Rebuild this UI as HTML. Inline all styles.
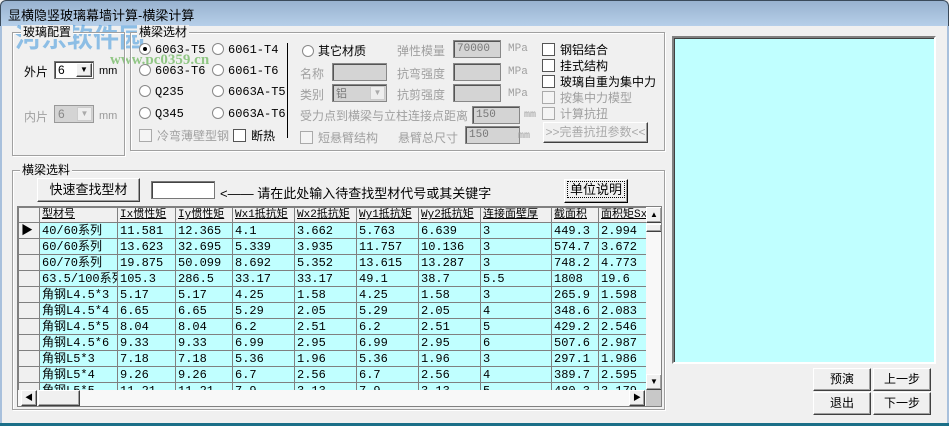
<!DOCTYPE html>
<html><head><meta charset="utf-8"><style>
*{margin:0;padding:0;box-sizing:border-box}
body{width:949px;height:426px;overflow:hidden;background:#f0f0f0;font:12px "Liberation Sans","Noto Sans CJK SC","WenQuanYi Zen Hei",sans-serif;color:#000;position:relative}
.a{position:absolute;white-space:nowrap}
.title{left:0;top:0;width:949px;height:26px;background:linear-gradient(#98b2cf,#b6cfe9);border:1px solid #3a4a5a;border-bottom:none;border-radius:6px 6px 0 0}
.grp{position:absolute;border:1px solid #a0a0a0;box-shadow:inset 1px 1px #fff,1px 1px #fff}
.lbl{position:absolute;background:#f0f0f0;padding:0 2px;top:-8px;left:6px;line-height:14px}
.rad{display:inline-block;width:12px;height:12px;border-radius:50%;border:1px solid #888;background:#fff;vertical-align:-2px;margin-right:4px;position:relative}
.chk{display:inline-block;width:13px;height:13px;border:1px solid #555;background:#fff;vertical-align:-2px;margin-right:5px}
.dis{color:#a0a0a0}
.dis .chk{border-color:#aaa;background:#f4f4f4}
.in{position:absolute;height:18px;border:1px solid #888;box-shadow:inset 1px 1px #555;background:#d4d4d4;color:#777;line-height:16px;padding-left:3px;font-family:"Liberation Mono",monospace;font-size:11px}
.btn{position:absolute;background:#f0f0f0;border:1px solid;border-color:#fff #404040 #404040 #fff;box-shadow:inset -1px -1px #a0a0a0;text-align:center}
.mono{font-family:"Liberation Mono","Noto Sans CJK SC",monospace}
table{border-collapse:collapse;table-layout:fixed}
td{border:1px solid #808080;height:16px;padding:0 0 0 2px;font-family:"Liberation Mono","Noto Sans CJK SC",monospace;font-size:12px;line-height:14px;overflow:hidden;white-space:nowrap;background:#c0ffff}
tr.h td{background:#f0f0f0;height:14px;text-decoration:underline;font-size:11px}
td.rh{background:#f0f0f0}
</style></head><body>
<div class="a title"></div>
<div class="a" style="left:8px;top:5px;font-size:13px">显横隐竖玻璃幕墙计算-横梁计算</div>
<div class="a" style="left:0;top:26px;width:2px;height:400px;background:#a8c0dc"></div>
<div class="a" style="right:0;top:26px;width:2px;height:400px;background:#a8c0dc"></div>
<div class="a" style="left:0;top:423px;width:949px;height:3px;background:#1b6f88"></div>
<div class="a" style="left:15px;top:18px;font-size:26px;font-weight:bold;color:rgba(60,150,220,.55)">河东软件园</div>
<div class="a" style="left:110px;top:52px;font-size:15px;font-weight:bold;color:rgba(80,170,60,.6);font-family:'Liberation Serif',serif">www.pc0359.cn</div>

<div class="grp" style="left:12px;top:32px;width:113px;height:124px"><span class="lbl" style="left:8px">玻璃配置</span></div>
<div class="a" style="left:24px;top:63px">外片</div>
<div class="a" style="left:54px;top:61px;width:40px;height:18px;background:#fff;border:1px solid #777;box-shadow:inset 1px 1px #444;padding-left:3px;line-height:16px">6</div>
<div class="btn" style="left:76px;top:63px;width:16px;height:14px;font-size:8px;line-height:12px">▼</div>
<div class="a" style="left:99px;top:65px;font-size:11px">mm</div>
<div class="a dis" style="left:24px;top:108px">内片</div>
<div class="a" style="left:54px;top:105px;width:40px;height:18px;background:#d4d4d4;border:1px solid #999;color:#888;padding-left:3px;line-height:16px">6</div>
<div class="a" style="left:77px;top:107px;width:15px;height:14px;border:1px solid #ccc;background:#eee;color:#aaa;font-size:8px;text-align:center;line-height:12px">▼</div>
<div class="a dis" style="left:99px;top:110px;font-size:11px;color:#999">mm</div>

<div class="grp" style="left:130px;top:32px;width:535px;height:119px"><span class="lbl">横梁选材</span></div>
<div class="a mono" style="left:139px;top:43px"><span class="rad" style="background:#fff"><span style="position:absolute;left:3px;top:3px;width:4px;height:4px;background:#000;border-radius:50%"></span></span>6063-T5</div>
<div class="a mono" style="left:212px;top:43px"><span class="rad"></span>6061-T4</div>
<div class="a mono" style="left:139px;top:64px"><span class="rad"></span>6063-T6</div>
<div class="a mono" style="left:212px;top:64px"><span class="rad"></span>6061-T6</div>
<div class="a mono" style="left:139px;top:85px"><span class="rad"></span>Q235</div>
<div class="a mono" style="left:212px;top:85px"><span class="rad"></span>6063A-T5</div>
<div class="a mono" style="left:139px;top:107px"><span class="rad"></span>Q345</div>
<div class="a mono" style="left:212px;top:107px"><span class="rad"></span>6063A-T6</div>
<div class="a dis" style="left:139px;top:127px"><span class="chk"></span>冷弯薄壁型钢</div>
<div class="a" style="left:233px;top:127px"><span class="chk"></span>断热</div>
<div class="a" style="left:287px;top:43px;width:1px;height:95px;background:#000"></div>
<div class="a" style="left:302px;top:42px"><span class="rad"></span>其它材质</div>
<div class="a dis" style="left:397px;top:42px">弹性模量</div>
<div class="in" style="left:453px;top:40px;width:48px">70000</div>
<div class="a dis mono" style="left:508px;top:43px;font-size:11px">MPa</div>
<div class="a dis" style="left:300px;top:65px">名称</div>
<div class="in" style="left:332px;top:63px;width:55px"></div>
<div class="a dis" style="left:397px;top:65px">抗弯强度</div>
<div class="in" style="left:453px;top:63px;width:48px"></div>
<div class="a dis mono" style="left:508px;top:66px;font-size:11px">MPa</div>
<div class="a dis" style="left:300px;top:86px">类别</div>
<div class="in" style="left:332px;top:84px;width:55px;color:#777;font-family:'Noto Sans CJK SC',sans-serif">铝</div>
<div class="a" style="left:370px;top:86px;width:15px;height:14px;background:#eee;border:1px solid #ccc;color:#aaa;font-size:8px;text-align:center;line-height:12px">▼</div>
<div class="a dis" style="left:397px;top:86px">抗剪强度</div>
<div class="in" style="left:453px;top:84px;width:48px"></div>
<div class="a dis mono" style="left:508px;top:88px;font-size:11px">MPa</div>
<div class="a dis" style="left:300px;top:107px">受力点到横梁与立柱连接点距离</div>
<div class="in" style="left:472px;top:106px;width:48px">150</div>
<div class="a dis mono" style="left:524px;top:110px;font-size:10px">mm</div>
<div class="a dis" style="left:300px;top:129px"><span class="chk"></span>短悬臂结构</div>
<div class="a dis" style="left:398px;top:129px">悬臂总尺寸</div>
<div class="in" style="left:465px;top:126px;width:55px">150</div>
<div class="a dis mono" style="left:518px;top:131px;font-size:10px">mm</div>
<div class="a" style="left:542px;top:41px"><span class="chk"></span>钢铝结合</div>
<div class="a" style="left:542px;top:57px"><span class="chk"></span>挂式结构</div>
<div class="a" style="left:542px;top:73px"><span class="chk"></span>玻璃自重为集中力</div>
<div class="a dis" style="left:542px;top:89px"><span class="chk"></span>按集中力模型</div>
<div class="a dis" style="left:542px;top:105px"><span class="chk"></span>计算抗扭</div>
<div class="btn dis" style="left:543px;top:122px;width:105px;height:21px;line-height:19px;color:#aaa">&gt;&gt;完善抗扭参数&lt;&lt;</div>

<div class="a" style="left:672px;top:36px;width:264px;height:328px;background:#c0ffff;border:2px solid;border-color:#808080 #fff #fff #808080;box-shadow:inset 1px 1px #404040"></div>

<div class="grp" style="left:12px;top:170px;width:653px;height:240px"><span class="lbl" style="left:7px">横梁选料</span></div>
<div class="btn" style="left:37px;top:178px;width:103px;height:24px;line-height:22px;font-size:13px">快速查找型材</div>
<div class="a" style="left:151px;top:181px;width:64px;height:18px;background:#fff;border:1px solid #777;box-shadow:inset 1px 1px #444"></div>
<div class="a" style="left:220px;top:183px;font-size:13px">&lt;—— 请在此处输入待查找型材代号或其关键字</div>
<div class="btn" style="left:564px;top:179px;width:64px;height:24px;line-height:20px;font-size:13px;border-color:#fff #000 #000 #fff"><span style="border:1px dotted #000;padding:0 2px">单位说明</span></div>

<div class="a" style="left:17px;top:206px;width:645px;height:201px;border:1px solid #808080;background:#f4f4f4;overflow:hidden">
<table style="width:630px">
<colgroup><col style="width:21px"><col style="width:78px"><col style="width:58px"><col style="width:57px"><col style="width:62px"><col style="width:62px"><col style="width:62px"><col style="width:62px"><col style="width:71px"><col style="width:47px"><col style="width:50px"></colgroup>
<tr class="h"><td></td><td>型材号</td><td>Ix惯性矩</td><td>Iy惯性矩</td><td>Wx1抵抗矩</td><td>Wx2抵抗矩</td><td>Wy1抵抗矩</td><td>Wy2抵抗矩</td><td>连接面壁厚</td><td>截面积</td><td>面积矩Sx</td></tr>
<tr><td class="rh">&#9654;</td><td>40/60系列</td><td>11.581</td><td>12.365</td><td>4.1</td><td>3.662</td><td>5.763</td><td>6.639</td><td>3</td><td>449.3</td><td>2.994</td></tr>
<tr><td class="rh"></td><td>60/60系列</td><td>13.623</td><td>32.695</td><td>5.339</td><td>3.935</td><td>11.757</td><td>10.136</td><td>3</td><td>574.7</td><td>3.672</td></tr>
<tr><td class="rh"></td><td>60/70系列</td><td>19.875</td><td>50.099</td><td>8.692</td><td>5.352</td><td>13.615</td><td>13.287</td><td>3</td><td>748.2</td><td>4.773</td></tr>
<tr><td class="rh"></td><td>63.5/100系列</td><td>105.3</td><td>286.5</td><td>33.17</td><td>33.17</td><td>49.1</td><td>38.7</td><td>5.5</td><td>1808</td><td>19.6</td></tr>
<tr><td class="rh"></td><td>角钢L4.5*3</td><td>5.17</td><td>5.17</td><td>4.25</td><td>1.58</td><td>4.25</td><td>1.58</td><td>3</td><td>265.9</td><td>1.598</td></tr>
<tr><td class="rh"></td><td>角钢L4.5*4</td><td>6.65</td><td>6.65</td><td>5.29</td><td>2.05</td><td>5.29</td><td>2.05</td><td>4</td><td>348.6</td><td>2.083</td></tr>
<tr><td class="rh"></td><td>角钢L4.5*5</td><td>8.04</td><td>8.04</td><td>6.2</td><td>2.51</td><td>6.2</td><td>2.51</td><td>5</td><td>429.2</td><td>2.546</td></tr>
<tr><td class="rh"></td><td>角钢L4.5*6</td><td>9.33</td><td>9.33</td><td>6.99</td><td>2.95</td><td>6.99</td><td>2.95</td><td>6</td><td>507.6</td><td>2.987</td></tr>
<tr><td class="rh"></td><td>角钢L5*3</td><td>7.18</td><td>7.18</td><td>5.36</td><td>1.96</td><td>5.36</td><td>1.96</td><td>3</td><td>297.1</td><td>1.986</td></tr>
<tr><td class="rh"></td><td>角钢L5*4</td><td>9.26</td><td>9.26</td><td>6.7</td><td>2.56</td><td>6.7</td><td>2.56</td><td>4</td><td>389.7</td><td>2.595</td></tr>
<tr><td class="rh"></td><td>角钢L5*5</td><td>11.21</td><td>11.21</td><td>7.9</td><td>3.13</td><td>7.9</td><td>3.13</td><td>5</td><td>480.3</td><td>3.179</td></tr>
</table>
<div class="a" style="left:628px;top:0;width:16px;height:183px;background:#f8f8f8"></div>
<div class="btn" style="left:628px;top:0;width:16px;height:16px;font-size:8px;line-height:14px">▲</div>
<div class="btn" style="left:628px;top:17px;width:16px;height:8px"></div>
<div class="btn" style="left:628px;top:167px;width:16px;height:16px;font-size:8px;line-height:14px">▼</div>
<div class="a" style="left:0;top:183px;width:644px;height:17px;background:#f8f8f8"></div>
<div class="btn" style="left:3px;top:183px;width:16px;height:16px;font-size:8px;line-height:14px">◀</div>
<div class="btn" style="left:20px;top:183px;width:42px;height:16px"></div>
<div class="btn" style="left:611px;top:183px;width:16px;height:16px;font-size:8px;line-height:14px">▶</div>
<div class="a" style="left:628px;top:183px;width:16px;height:17px;background:#c8c8c8"></div>
</div>

<div class="btn" style="left:813px;top:368px;width:58px;height:23px;line-height:21px">预演</div>
<div class="btn" style="left:873px;top:368px;width:58px;height:23px;line-height:21px">上一步</div>
<div class="btn" style="left:813px;top:392px;width:58px;height:23px;line-height:21px">退出</div>
<div class="btn" style="left:873px;top:392px;width:58px;height:23px;line-height:21px">下一步</div>
</body></html>
